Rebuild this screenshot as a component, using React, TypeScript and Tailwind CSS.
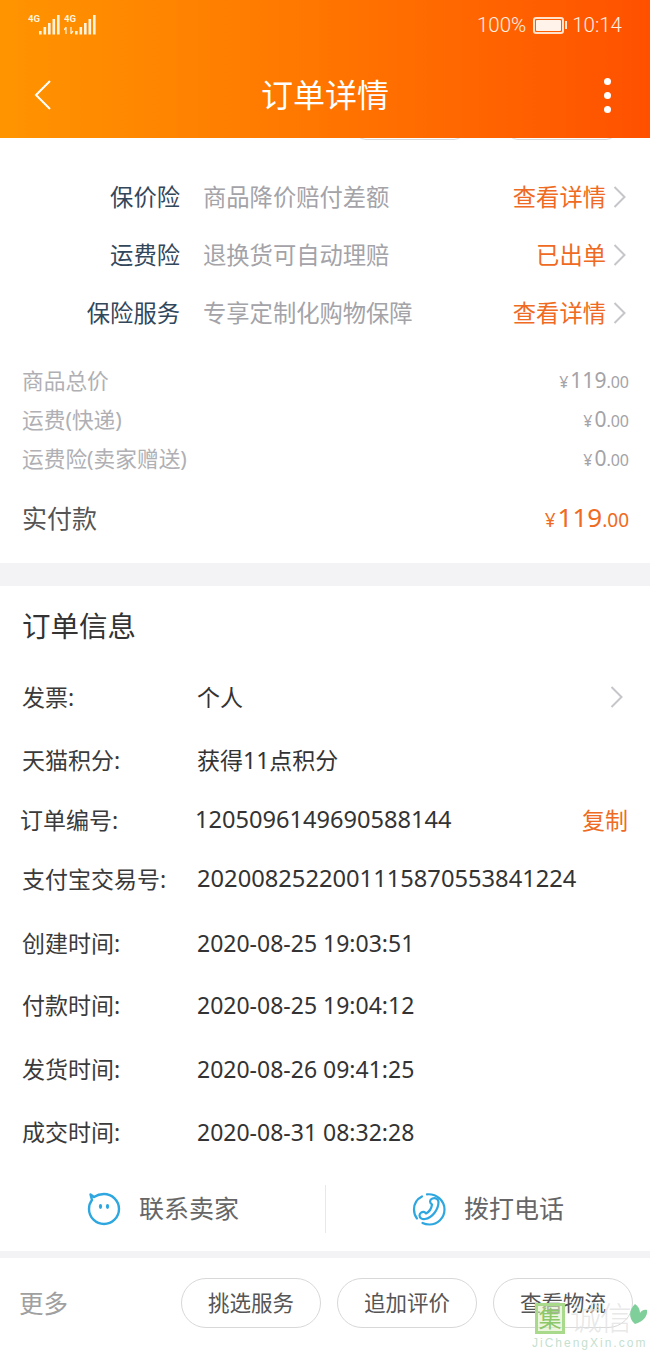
const insurance = [
  { label: '保价险', desc: '商品降价赔付差额', action: '查看详情' },
  { label: '运费险', desc: '退换货可自动理赔', action: '已出单' },
  { label: '保险服务', desc: '专享定制化购物保障', action: '查看详情' },
];

const prices = [
  { label: '商品总价', yuan: '119' },
  { label: '运费(快递)', yuan: '0' },
  { label: '运费险(卖家赠送)', yuan: '0' },
];

const orderInfo = [
  { label: '发票:', value: '个人', gap: 'mt-[2px]', arrow: true },
  { label: '天猫积分:', value: '获得11点积分', gap: 'mt-[5px]' },
  { label: '订单编号:', value: '1205096149690588144', gap: 'mt-[2px] ml-[-2px]', text: 'text-[23.6px]', copy: true },
  { label: '支付宝交易号:', value: '2020082522001115870553841224', gap: 'mt-[1px]', text: 'text-[23.7px]' },
  { label: '创建时间:', value: '2020-08-25 19:03:51', gap: 'mt-[6px]' },
  { label: '付款时间:', value: '2020-08-25 19:04:12', gap: 'mt-[4px]' },
  { label: '发货时间:', value: '2020-08-26 09:41:25', gap: 'mt-[6px]' },
  { label: '成交时间:', value: '2020-08-31 08:32:28', gap: 'mt-[5px]' },
];

function Chevron() {
  return (
    <svg width="13" height="24" viewBox="0 0 13 24" fill="none" stroke="#c6c6ca" strokeWidth="2">
      <path d="M1.5 2 L11.5 12 L1.5 22" />
    </svg>
  );
}

function SignalIcon({ arrows }: { arrows?: boolean }) {
  return (
    <svg width="33" height="22" viewBox="0 0 33 22" fill="#fff3dc">
      <text x="0" y="8" fontSize="9.5" fontWeight="700" fontFamily="Roboto, sans-serif">4G</text>
      {arrows && <path d="M2 20v-7M2 13l-2 3M7 13v7M7 20l2-3" stroke="#fff3dc" strokeWidth="1.2" fill="none" />}
      <rect x="11" y="17" width="2.6" height="3.5" />
      <rect x="15.5" y="13" width="2.6" height="7.5" />
      <rect x="20" y="9" width="2.6" height="11.5" />
      <rect x="24.5" y="5" width="2.6" height="15.5" />
      <rect x="29" y="1" width="2.6" height="19.5" />
    </svg>
  );
}

function ChatIcon() {
  return (
    <svg width="36" height="36" viewBox="0 0 36 36" fill="none" stroke="#2ea7e0" strokeWidth="2.4">
      <path d="M8 6 C11 4 14 3 18 3 C26 3 33 9.5 33 18 C33 26.5 26 33 18 33 C10 33 3 26.5 3 18 C3 14.5 4 11.5 6 9 L4.5 3.5 Z" strokeLinejoin="round" />
      <ellipse cx="14.5" cy="15.5" rx="1.6" ry="2.4" fill="#2ea7e0" stroke="none" />
      <ellipse cx="21.5" cy="15.5" rx="1.6" ry="2.4" fill="#2ea7e0" stroke="none" />
    </svg>
  );
}

function PhoneIcon() {
  return (
    <svg width="36" height="36" viewBox="0 0 36 36" fill="none" stroke="#2ea7e0" strokeWidth="2.2" strokeLinecap="round" strokeLinejoin="round">
      <path d="M11 5.5 C6 8 3 13 3 18.5 C3 22 4 25 6 27.5" />
      <path d="M16 3.3 C26 2.5 33.5 10 33.5 18.5 C33.5 27 26.5 33.5 18.5 33.5 C15.5 33.5 13.5 33 11.5 32" />
      <path d="M21.5 7.5 C24.5 6.3 27.5 8 27.5 11 C27.5 18 21.5 27 14 28 C11 28.4 8.5 27 8.5 24.5 C8.5 22 11 20.5 13.5 21 L15 22.5 C18 21 20.5 17 21 13.5 L19.5 12 C18.5 10 19.5 8.3 21.5 7.5 Z" />
    </svg>
  );
}

function Price({ yuan }: { yuan: string }) {
  return (
    <span className="flex items-baseline text-[#a3a3a8] leading-none mt-[-3px]">
      <span className="text-[16px] mr-[2px]">¥</span>
      <span className="text-[21px]">{yuan}</span>
      <span className="text-[16px]">.00</span>
    </span>
  );
}

export default function App() {
  return (
    <div className="relative w-[650px] h-[1350px] overflow-hidden bg-white font-['Noto_Sans','Noto_Sans_CJK_SC',sans-serif]">
      {/* top bar */}
      <header className="h-[138px] bg-gradient-to-r from-[#ff9400] to-[#ff5000] text-white">
        <div className="h-[50px] flex items-center justify-between pl-[28px] pr-[28px]">
          <div className="flex items-center gap-[3px]">
            <SignalIcon />
            <SignalIcon arrows />
          </div>
          <div className="flex items-center text-[20.5px] text-[#fff0e4] font-['Roboto',sans-serif] font-light">
            <span>100%</span>
            <span className="ml-[7px] w-[31px] h-[17px] border-2 border-[#ffe2cc] rounded-[3px] p-[1px]">
              <span className="block h-full bg-[#fff3ea] rounded-[1px]" />
            </span>
            <span className="ml-[1px] w-[2px] h-[8px] bg-[#ffe9d8]" />
            <span className="ml-[5px]">10:14</span>
          </div>
        </div>
        <div className="h-[88px] flex items-center justify-between pl-[33px] pr-[39px] mt-[1px]">
          <svg width="20" height="32" viewBox="0 0 20 32" fill="none" stroke="#fff" strokeWidth="2">
            <path d="M17 2 L3 16 L17 30" />
          </svg>
          <h1 className="text-[32px] font-normal leading-none">订单详情</h1>
          <div className="w-[14px] flex flex-col items-end gap-[7px]">
            <span className="w-[7px] h-[7px] rounded-full bg-white" />
            <span className="w-[7px] h-[7px] rounded-full bg-white" />
            <span className="w-[7px] h-[7px] rounded-full bg-white" />
          </div>
        </div>
      </header>

      {/* clipped buttons from the scrolled-away row */}
      <div className="h-[30px] overflow-hidden">
        <div className="flex pl-[354px] gap-[40px] mt-[-40px]">
          <div className="w-[112px] h-[42px] border border-[#d8d8d8] rounded-[12px]" />
          <div className="w-[112px] h-[42px] border border-[#d8d8d8] rounded-[12px]" />
        </div>
      </div>

      {/* insurance rows */}
      <section>
        {insurance.map((row) => (
          <div key={row.label} className="h-[58px] flex items-center">
            <span className="w-[180px] text-right text-[23.3px] text-[#33475b]">{row.label}</span>
            <span className="ml-[23px] flex-1 text-[23.3px] text-[#a3a3a8]">{row.desc}</span>
            <span className="text-[23.3px] text-[#ef6a22]">{row.action}</span>
            <span className="ml-[7px] mr-[24px]">
              <Chevron />
            </span>
          </div>
        ))}
      </section>

      {/* price summary */}
      <section className="mt-[20px] pl-[22px] pr-[21px]">
        {prices.map((p) => (
          <div key={p.label} className="h-[39px] flex items-center justify-between">
            <span className="text-[21.7px] text-[#b0b0b4]">{p.label}</span>
            <Price yuan={p.yuan} />
          </div>
        ))}
        <div className="mt-[20px] h-[39px] flex items-center justify-between">
          <span className="text-[25px] text-[#555]">实付款</span>
          <span className="flex items-baseline text-[#ef6a22] leading-none mt-[-4px]">
            <span className="text-[19px] mr-[2px]">¥</span>
            <span className="text-[26px]">119</span>
            <span className="text-[19px]">.00</span>
          </span>
        </div>
      </section>

      <div className="mt-[25px] h-[23px] bg-[#f3f3f5]" />

      {/* order info */}
      <section className="pl-[22px] pr-[22px]">
        <h2 className="h-[80px] flex items-center text-[28.5px] text-[#333]">订单信息</h2>
        {orderInfo.map((row) => (
          <div key={row.label} className={`${row.gap} h-[58px] flex items-center text-[#333] text-[23px]`}>
            <span className="w-[175px] shrink-0 text-[#3a3a3a]">{row.label}</span>
            <span className={`flex-1 ${row.text ?? ''}`}>{row.value}</span>
            {row.arrow && (
              <span className="mr-[5px]">
                <Chevron />
              </span>
            )}
            {row.copy && <span className="text-[#ef6a22]">复制</span>}
          </div>
        ))}
      </section>

      {/* contact */}
      <section className="h-[72px] mt-[12px] flex items-center">
        <div className="flex-1 flex items-center pl-[86px] gap-[17px] text-[25px] text-[#666]">
          <ChatIcon />
          <span>联系卖家</span>
        </div>
        <div className="w-px h-[48px] bg-[#e8e8e8]" />
        <div className="flex-1 flex items-center pl-[85px] gap-[17px] text-[25px] text-[#666]">
          <PhoneIcon />
          <span>拨打电话</span>
        </div>
      </section>

      <div className="mt-[6px] h-[7px] bg-[#f3f3f5]" />

      {/* bottom actions */}
      <footer className="h-[92px] flex items-center pl-[19px] pr-[17px]">
        <span className="text-[24.5px] text-[#a0a0a0] mr-auto mt-[1px]">更多</span>
        <div className="flex gap-[16px] mt-[-2px]">
          {['挑选服务', '追加评价', '查看物流'].map((b) => (
            <button key={b} className="w-[140px] h-[50px] border border-[#d8d8d8] rounded-[25px] text-[21.5px] text-[#555]">
              {b}
            </button>
          ))}
        </div>
      </footer>

      {/* watermark */}
      <div className="absolute left-[535px] top-[1303px] w-[30px] h-[31px] border-[3px] border-[#a9d98a] bg-[#dff0c8]/60 flex items-center justify-center text-[23px] leading-none text-[#8cc76a]">
        集
      </div>
      <div className="absolute left-[570px] top-[1302px] text-[32px] font-light leading-none tracking-[-2px] text-[#e2e2e2]/80">诚信</div>
      <svg className="absolute left-[627px] top-[1302px]" width="22" height="24" viewBox="0 0 22 24">
        <path d="M8 2 C2 8 1 16 8 22 C16 20 21 14 20 8 C17 7 14 9 13 11 C13 7 11 4 8 2 Z" fill="#7fcf9a" />
      </svg>
      <div className="absolute left-[532px] top-[1337px] text-[12px] leading-none tracking-[2px] text-[#c6dfcf] font-['Liberation_Sans',sans-serif]">
        JiChengXin.com
      </div>
    </div>
  );
}
